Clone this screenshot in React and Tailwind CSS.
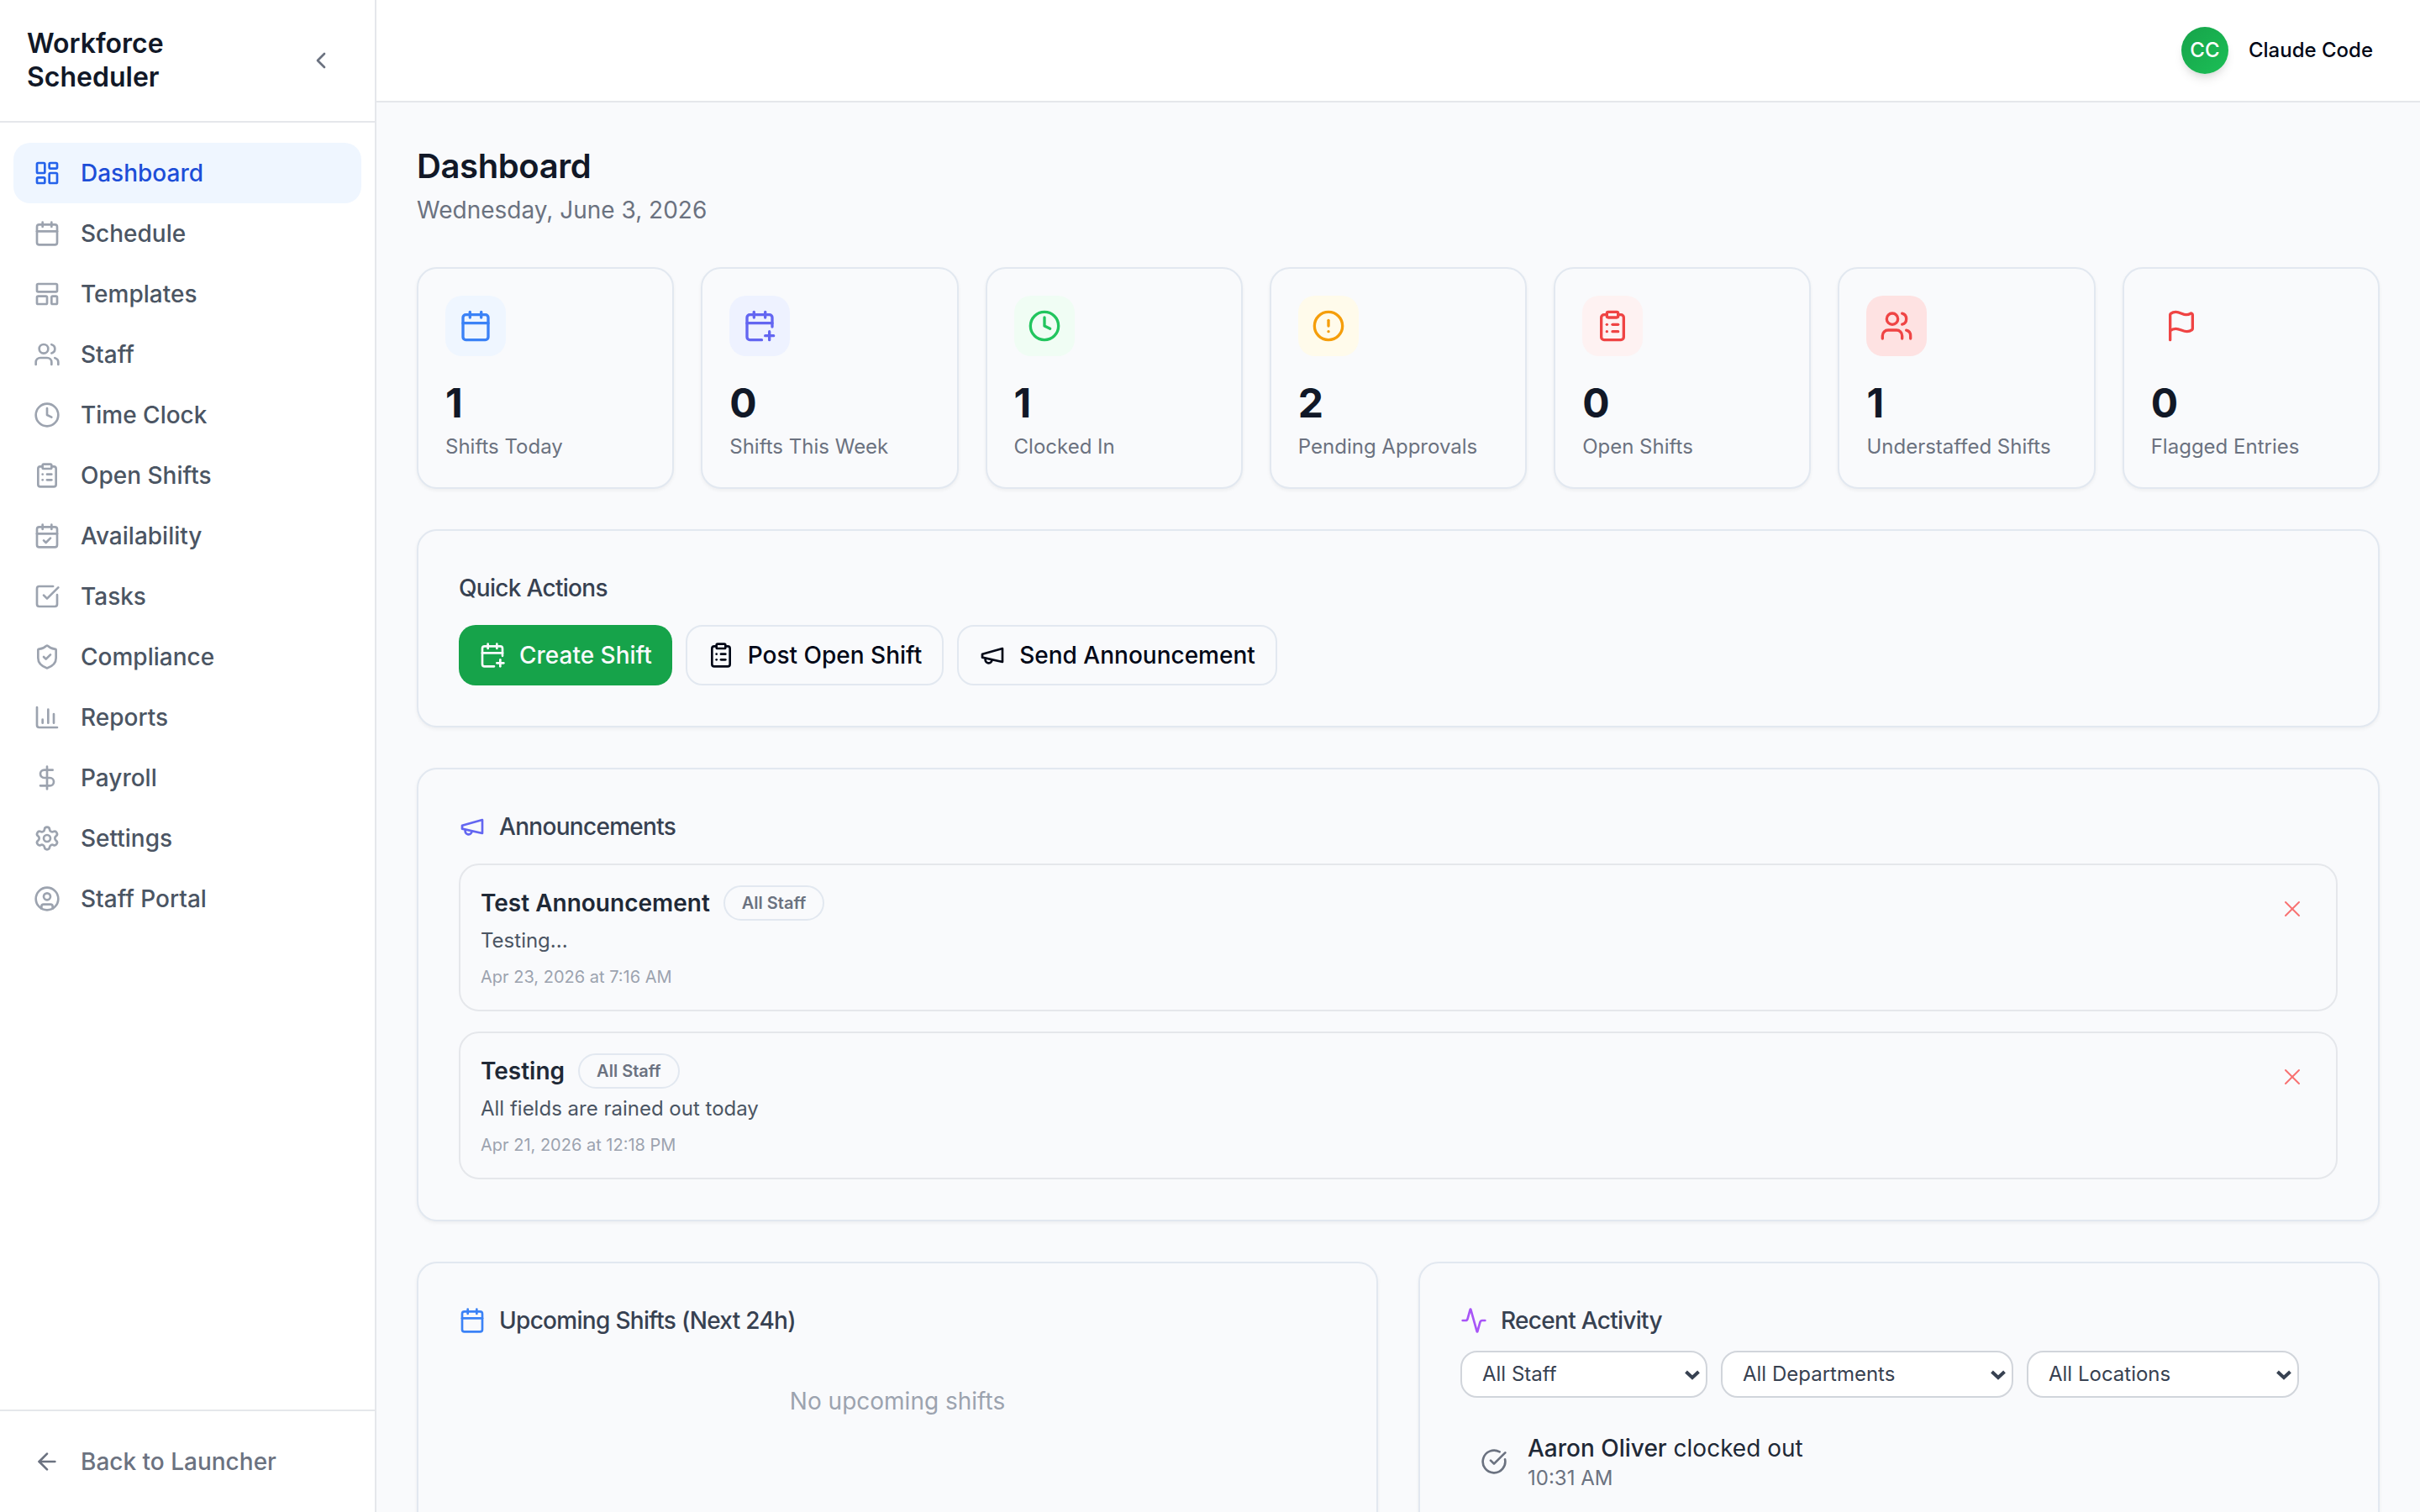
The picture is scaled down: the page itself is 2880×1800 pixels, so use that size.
import React, { useState } from 'react';
import {
  Activity,
  ArrowLeft,
  Calendar,
  CalendarCheck,
  CalendarPlus,
  ChartColumn,
  ChevronLeft,
  CircleAlert,
  CircleCheckBig,
  CircleUser,
  ClipboardList,
  Clock,
  DollarSign,
  Flag,
  LayoutDashboard,
  LayoutTemplate,
  Settings,
  ShieldCheck,
  SquareCheckBig,
  Users,
  X,
} from 'lucide-react';

const navItems = [
  { label: 'Dashboard', icon: LayoutDashboard },
  { label: 'Schedule', icon: Calendar },
  { label: 'Templates', icon: LayoutTemplate },
  { label: 'Staff', icon: Users },
  { label: 'Time Clock', icon: Clock },
  { label: 'Open Shifts', icon: ClipboardList },
  { label: 'Availability', icon: CalendarCheck },
  { label: 'Tasks', icon: SquareCheckBig },
  { label: 'Compliance', icon: ShieldCheck },
  { label: 'Reports', icon: ChartColumn },
  { label: 'Payroll', icon: DollarSign },
  { label: 'Settings', icon: Settings },
  { label: 'Staff Portal', icon: CircleUser },
];

const stats = [
  { label: 'Shifts Today', value: 1, icon: Calendar, color: 'bg-[#eff6ff] text-[#3b82f6]' },
  { label: 'Shifts This Week', value: 0, icon: CalendarPlus, color: 'bg-[#eef2ff] text-[#6366f1]' },
  { label: 'Clocked In', value: 1, icon: Clock, color: 'bg-[#f0fdf4] text-[#22c55e]' },
  { label: 'Pending Approvals', value: 2, icon: CircleAlert, color: 'bg-[#fffbeb] text-[#f59e0b]' },
  { label: 'Open Shifts', value: 0, icon: ClipboardList, color: 'bg-[#fef2f2] text-[#ef4444]' },
  { label: 'Understaffed Shifts', value: 1, icon: Users, color: 'bg-[#fee2e2] text-[#ef4444]' },
  { label: 'Flagged Entries', value: 0, icon: Flag, color: 'text-[#ef4444]' },
];

const initialAnnouncements = [
  { id: 1, title: 'Test Announcement', audience: 'All Staff', body: 'Testing...', date: 'Apr 23, 2026 at 7:16 AM' },
  { id: 2, title: 'Testing', audience: 'All Staff', body: 'All fields are rained out today', date: 'Apr 21, 2026 at 12:18 PM' },
];

const filters = [
  { label: 'All Staff', name: 'staff', width: 'w-[294px]' },
  { label: 'All Departments', name: 'department', width: 'w-[348px]' },
  { label: 'All Locations', name: 'location', width: 'w-[324px]' },
];

const MegaphoneIcon = ({ className }) => (
  <svg
    className={className}
    viewBox="0 0 24 24"
    fill="none"
    stroke="currentColor"
    strokeWidth="2"
    strokeLinecap="round"
    strokeLinejoin="round"
    aria-hidden="true"
  >
    <path d="m3 11 18-5v12L3 14v-3z" />
    <path d="M11.6 16.8a3 3 0 1 1-5.8-1.6" />
  </svg>
);

const Card = ({ className = '', children }) => (
  <section
    className={`rounded-3xl border-2 border-[#e2e8f0] bg-[#f9fafc] shadow-[0_2px_4px_rgba(0,0,0,0.05)] ${className}`}
  >
    {children}
  </section>
);

const CardTitle = ({ icon, children }) => (
  <h2 className="flex items-center gap-4 text-[28px] leading-10 font-medium tracking-tight text-[#374151]">
    {icon}
    {children}
  </h2>
);

const Sidebar = () => (
  <aside className="flex w-[448px] shrink-0 flex-col border-r-2 border-[#e5e7eb] bg-white">
    <div className="flex items-center justify-between border-b-2 border-[#e5e7eb] p-8">
      <div className="w-48 text-[32px] leading-10 font-semibold text-[#111827]">Workforce Scheduler</div>
      <button className="flex size-16 items-center justify-center text-[#6b7280]" aria-label="Collapse sidebar">
        <ChevronLeft className="size-8" />
      </button>
    </div>
    <nav className="flex-1 px-4 py-6">
      {navItems.map(({ label, icon: Icon }, i) => (
        <a
          key={label}
          href="#"
          className={`flex items-center gap-6 rounded-[20px] px-6 py-4 text-[28px] leading-10 font-medium ${
            i === 0 ? 'bg-[#eff6ff] text-[#1d4ed8]' : 'text-[#4b5563]'
          }`}
        >
          <Icon className={`size-8 ${i === 0 ? 'text-[#2563eb]' : 'text-[#9ca3af]'}`} />
          {label}
        </a>
      ))}
    </nav>
    <div className="border-t-2 border-[#e5e7eb] px-4 py-6">
      <a href="#" className="flex items-center gap-6 px-6 py-4 text-[28px] leading-10 font-medium text-[#6b7280]">
        <ArrowLeft className="size-8" />
        Back to Launcher
      </a>
    </div>
  </aside>
);

const Header = () => (
  <header className="flex justify-end border-b-2 border-[#e5e7eb] bg-white px-12 py-8">
    <button className="flex items-center gap-6 pr-2">
      <span className="flex size-14 items-center justify-center rounded-full bg-linear-to-br from-[#16a34a] to-[#1cbf56] text-2xl font-medium text-white shadow-[0_8px_12px_-2px_rgba(0,0,0,0.1),0_4px_8px_-4px_rgba(0,0,0,0.1)]">
        CC
      </span>
      <span className="text-2xl font-medium text-[#020817]">Claude Code</span>
    </button>
  </header>
);

const StatCard = ({ label, value, icon: Icon, color }) => (
  <Card className="p-8">
    <div className={`flex size-[72px] items-center justify-center rounded-[20px] ${color}`}>
      <Icon className="size-10" />
    </div>
    <div className="mt-6 text-5xl leading-[64px] font-bold text-[#111827]">{value}</div>
    <div className="mt-1 text-2xl text-[#6b7280]">{label}</div>
  </Card>
);

const Announcement = ({ item, onDismiss }) => (
  <article className="flex items-start justify-between rounded-3xl border-2 border-[#e5e7eb] p-6">
    <div>
      <div className="flex items-center gap-4">
        <h3 className="text-[28px] leading-[42px] font-semibold text-[#1f2937]">{item.title}</h3>
        <span className="rounded-full border-2 border-[#e2e8f0] px-5 py-1 text-xl leading-[30px] font-semibold text-[#6b7280]">
          {item.audience}
        </span>
      </div>
      <p className="mt-1 text-2xl leading-10 text-[#4b5563]">{item.body}</p>
      <p className="mt-2 text-xl leading-[30px] text-[#9ca3af]">{item.date}</p>
    </div>
    <button
      className="flex size-14 items-center justify-center text-[#f87171]"
      aria-label={`Dismiss ${item.title}`}
      onClick={() => onDismiss(item.id)}
    >
      <X className="size-8" strokeWidth={1.5} />
    </button>
  </article>
);

const FilterSelect = ({ label, name, width }) => (
  <div className={`relative ${width}`}>
    <select
      name={name}
      aria-label={`Filter by ${name}`}
      className="h-14 w-full appearance-none rounded-[20px] border-2 border-[#d1d5db] bg-white px-6 text-2xl text-[#374151]"
    >
      <option>{label}</option>
    </select>
    <svg
      className="pointer-events-none absolute top-[23px] right-2 h-3 w-5 text-[#374151]"
      viewBox="0 0 20 12"
      fill="none"
      stroke="currentColor"
      strokeWidth="4"
      aria-hidden="true"
    >
      <path d="M2.5 2 10 9l7.5-7" />
    </svg>
  </div>
);

const App = () => {
  const [announcements, setAnnouncements] = useState(initialAnnouncements);

  const handleDismiss = (id) => {
    setAnnouncements(announcements.filter((a) => a.id !== id));
  };

  return (
    <div className="flex h-screen overflow-hidden bg-[#f9fafc] font-['Inter',sans-serif]">
      <Sidebar />
      <div className="flex min-w-0 flex-1 flex-col">
        <Header />
        <main className="flex-1 space-y-12 overflow-hidden p-12">
          <div>
            <h1 className="text-[40px] leading-[56px] font-semibold tracking-[-0.01em] text-[#111827]">Dashboard</h1>
            <p className="mt-1 text-[28px] leading-10 text-[#6b7280]">Wednesday, June 3, 2026</p>
          </div>

          <div className="grid grid-cols-7 gap-8">
            {stats.map((stat) => (
              <StatCard key={stat.label} {...stat} />
            ))}
          </div>

          <Card className="p-12">
            <CardTitle>Quick Actions</CardTitle>
            <div className="mt-6 flex gap-4 text-[28px] leading-10 font-medium text-[#020817]">
              <button className="flex h-[72px] items-center gap-4 rounded-[20px] bg-[#16a34a] px-6 text-[#f8fafc]">
                <CalendarPlus className="size-8" />
                Create Shift
              </button>
              <button className="flex h-[72px] items-center gap-4 rounded-[20px] border-2 border-[#e2e8f0] px-6">
                <ClipboardList className="size-8" />
                Post Open Shift
              </button>
              <button className="flex h-[72px] items-center gap-4 rounded-[20px] border-2 border-[#e2e8f0] px-6">
                <MegaphoneIcon className="size-8" />
                Send Announcement
              </button>
            </div>
          </Card>

          <Card className="p-12">
            <CardTitle icon={<MegaphoneIcon className="size-8 text-[#6366f1]" />}>Announcements</CardTitle>
            <div className="mt-6 space-y-6">
              {announcements.map((item) => (
                <Announcement key={item.id} item={item} onDismiss={handleDismiss} />
              ))}
            </div>
          </Card>

          <div className="grid grid-cols-2 gap-12">
            <Card className="min-h-[480px] p-12">
              <CardTitle icon={<Calendar className="size-8 text-[#3b82f6]" />}>Upcoming Shifts (Next 24h)</CardTitle>
              <p className="mt-6 py-8 text-center text-[28px] leading-10 text-[#9ca3af]">No upcoming shifts</p>
            </Card>

            <Card className="min-h-[480px] p-12">
              <CardTitle icon={<Activity className="size-8 text-[#a855f7]" />}>Recent Activity</CardTitle>
              <div className="mt-4 flex gap-4">
                {filters.map((filter) => (
                  <FilterSelect key={filter.name} {...filter} />
                ))}
              </div>
              <div className="mt-6 flex items-center gap-6 px-6 py-4">
                <CircleCheckBig className="size-8 text-[#6b7280]" />
                <div>
                  <p className="text-[28px] leading-10 text-[#1f2937]">
                    <span className="font-medium">Aaron Oliver</span> clocked out
                  </p>
                  <p className="text-2xl text-[#6b7280]">10:31 AM</p>
                </div>
              </div>
            </Card>
          </div>
        </main>
      </div>
    </div>
  );
};

export default App;
